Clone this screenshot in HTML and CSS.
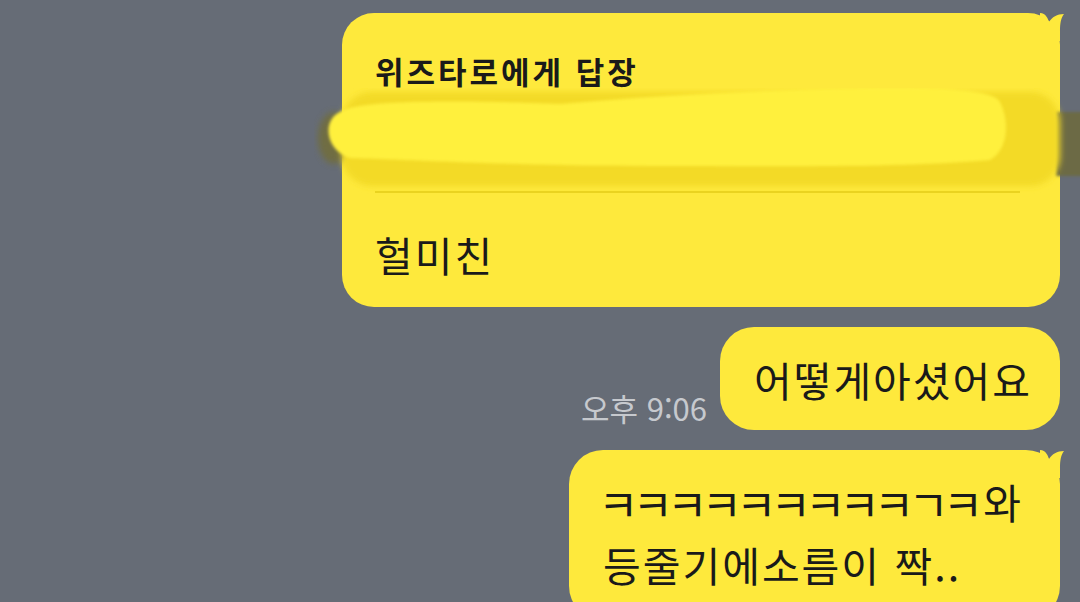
FILE: index.html
```html
<!DOCTYPE html>
<html lang="ko">
<head>
  <meta charset="utf-8">
  <title>채팅</title>
  <link rel="stylesheet" href="styles.css">
</head>
<body>
  <div class="chat">
    <div class="bubble reply">
      <svg class="tail" width="26" height="32" viewBox="0 0 26 32"><path d="M0 4 C6 4 8 10 9 13 C12 8 17 5 24 5 C21 9 20 14 20 22 L20 32 L0 32 Z"/></svg>
      <div class="reply-title">위즈타로에게 답장</div>
      <div class="reply-quote">
        <svg class="scribble" width="768" height="110" viewBox="312 88 768 110">
          <defs>
            <filter id="soft" x="-10%" y="-40%" width="120%" height="180%"><feGaussianBlur stdDeviation="3"/></filter>
            <filter id="softer" x="-10%" y="-40%" width="120%" height="180%"><feGaussianBlur stdDeviation="1.5"/></filter>
          </defs>
          <ellipse cx="334" cy="138" rx="16" ry="26" fill="#6f6d42" filter="url(#soft)"/>
          <rect x="1056" y="112" width="30" height="64" fill="#6c6a44" filter="url(#softer)"/>
          <rect x="342" y="92" width="718" height="94" rx="30" fill="#f3da25" filter="url(#soft)"/>
          <path d="M340 112 C360 100 450 100 560 104 C650 96 760 90 860 88 C940 86 995 90 1000 102 C1010 122 1008 150 990 160 C900 168 780 166 650 166 C520 166 420 160 350 158 C325 150 322 120 340 112 Z" fill="#fff03e" filter="url(#softer)"/>
        </svg>
      </div>
      <div class="message">헐미친</div>
    </div>

    <div class="row">
      <span class="time">오후 9:06</span>
      <div class="bubble short">
        <div class="message">어떻게아셨어요</div>
      </div>
    </div>

    <div class="bubble last">
      <svg class="tail" width="26" height="32" viewBox="0 0 26 32"><path d="M0 4 C6 4 8 10 9 13 C12 8 17 5 24 5 C21 9 20 14 20 22 L20 32 L0 32 Z"/></svg>
      <div class="message"><span class="laugh">ㅋㅋㅋㅋㅋㅋㅋㅋㅋㄱㅋ</span>와<br>등줄기에소름이 짝..</div>
    </div>
  </div>
</body>
</html>
```

FILE: styles.css
```css
body {
  margin: 0;
  height: 602px;
  overflow: hidden;
  background-color: #666c76;
  font-family: "Noto Sans CJK KR", "Noto Sans", sans-serif;
  color: #1a1a1a;
}
.chat {
  display: flex;
  flex-direction: column;
  align-items: flex-end;
  gap: 20px;
  padding: 13px 20px 0 0;
}
.bubble {
  position: relative;
  background-color: #fee93c;
  border-radius: 34px;
  box-sizing: border-box;
}
.tail {
  position: absolute;
  top: -4px;
  right: -6px;
  fill: #fee93c;
}
.message {
  font-size: 41px;
  letter-spacing: 2px;
  line-height: 54px;
}
.reply {
  width: 718px;
  height: 294px;
  padding: 38px 40px 0 33px;
  border-radius: 32px;
}
.reply-title {
  font-size: 31px;
  font-weight: bold;
  letter-spacing: 3px;
  line-height: 40px;
}
.reply-quote {
  position: relative;
  height: 100px;
  border-bottom: 2px solid #ead321;
}
.scribble {
  position: absolute;
  left: -63px;
  top: -3px;
}
.reply .message {
  margin-top: 34px;
}
.row {
  display: flex;
  align-items: flex-end;
}
.time {
  font-size: 31px;
  line-height: 40px;
  color: #c6c9ce;
  margin: 0 13px 2px 0;
}
.short {
  height: 103px;
  padding: 0 28px 0 34px;
  display: flex;
  align-items: center;
}
.last {
  width: 491px;
  height: 170px;
  padding: 21px 30px 0 34px;
}
.last .message {
  line-height: 61px;
}
.laugh {
  font-size: 44px;
  letter-spacing: -6px;
  margin: 0 6px 0 -5px;
  vertical-align: -3px;
}
```
